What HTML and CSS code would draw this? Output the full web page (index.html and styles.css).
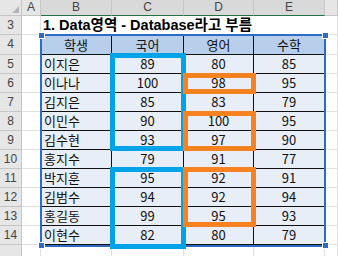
FILE: index.html
```html
<!DOCTYPE html>
<html>
<head>
<meta charset="utf-8">
<link rel="stylesheet" href="styles.css">
</head>
<body>
<div class="sheet">
  <div class="grid">
    <div class="corner"><svg width="21" height="15" viewBox="0 0 21 15"><polygon points="19,6 19,13 12,13" fill="#b4b4b4"/></svg></div>
    <div class="ch">A</div>
    <div class="ch hl">B</div>
    <div class="ch hl">C</div>
    <div class="ch hl">D</div>
    <div class="ch hl">E</div>
    <div class="ch"></div>

    <div class="rh">3</div>
    <div class="c"></div>
    <div class="c title">1. Data영역 - Database라고 부름</div>
    <div class="c"></div>

    <div class="rh">4</div>
    <div class="c"></div>
    <div class="th">학생</div>
    <div class="th">국어</div>
    <div class="th">영어</div>
    <div class="th">수학</div>
    <div class="c"></div>

    <div class="rh">5</div><div class="c"></div><div class="td name">이지은</div><div class="td">89</div><div class="td">80</div><div class="td">85</div><div class="c"></div>
    <div class="rh">6</div><div class="c"></div><div class="td name">이나나</div><div class="td">100</div><div class="td">98</div><div class="td">95</div><div class="c"></div>
    <div class="rh">7</div><div class="c"></div><div class="td name">김지은</div><div class="td">85</div><div class="td">83</div><div class="td">79</div><div class="c"></div>
    <div class="rh">8</div><div class="c"></div><div class="td name">이민수</div><div class="td">90</div><div class="td">100</div><div class="td">95</div><div class="c"></div>
    <div class="rh">9</div><div class="c"></div><div class="td name">김수현</div><div class="td">93</div><div class="td">97</div><div class="td">90</div><div class="c"></div>
    <div class="rh">10</div><div class="c"></div><div class="td name">홍지수</div><div class="td">79</div><div class="td">91</div><div class="td">77</div><div class="c"></div>
    <div class="rh">11</div><div class="c"></div><div class="td name">박지훈</div><div class="td">95</div><div class="td">92</div><div class="td">91</div><div class="c"></div>
    <div class="rh">12</div><div class="c"></div><div class="td name">김범수</div><div class="td">94</div><div class="td">92</div><div class="td">94</div><div class="c"></div>
    <div class="rh">13</div><div class="c"></div><div class="td name">홍길동</div><div class="td">99</div><div class="td">95</div><div class="td">93</div><div class="c"></div>
    <div class="rh">14</div><div class="c"></div><div class="td name">이현수</div><div class="td">82</div><div class="td">80</div><div class="td">79</div><div class="c"></div>

    <div class="rh"></div><div class="c"></div><div class="c"></div><div class="c"></div><div class="c"></div><div class="c"></div><div class="c"></div>
  </div>

  <div class="frame"></div>
  <div class="handle h-tl"></div>
  <div class="handle h-tr"></div>
  <div class="handle h-bl"></div>
  <div class="handle h-br"></div>

  <div class="box cyan cy1"></div>
  <div class="box cyan cy2"></div>
  <div class="box orange or1"></div>
  <div class="box orange or2"></div>
  <div class="box orange or3"></div>
</div>
</body>
</html>
```

FILE: styles.css
```css
html, body {
  margin: 0;
  padding: 0;
  background: #ffffff;
}

.sheet {
  position: relative;
  width: 338px;
  height: 256px;
  overflow: hidden;
  font-family: "Noto Sans CJK KR", "Noto Sans", sans-serif;
  color: #111;
}

.grid {
  display: grid;
  grid-template-columns: 22px 19px 71px 72px 70px 71px 1fr;
  grid-template-rows: 16px 19px 20px repeat(10, 19px) 20px;
}

.grid > div {
  box-sizing: border-box;
}

.corner {
  background: #e6e6e6;
  border-right: 1px solid #c6c6c6;
  border-bottom: 1px solid #c6c6c6;
}
.corner svg { display: block; }

.ch {
  background: #e6e6e6;
  border-right: 1px solid #c6c6c6;
  border-bottom: 1px solid #c6c6c6;
  font-family: "Liberation Sans", "Noto Sans", sans-serif;
  font-size: 12px;
  line-height: 15px;
  text-align: center;
  color: #444;
}
.ch.hl {
  background: #d9d9d9;
  border-bottom: 1px solid #217346;
}

.rh {
  background: #e6e6e6;
  border-right: 1px solid #c6c6c6;
  border-bottom: 1px solid #c6c6c6;
  font-family: "Liberation Sans", "Noto Sans", sans-serif;
  font-size: 12px;
  line-height: 18px;
  text-align: center;
  color: #444;
}

.c {
  border-right: 1px solid #e1e1e1;
  border-bottom: 1px solid #e1e1e1;
}

.title {
  grid-column: span 4;
  border-right: none;
  font-family: "Liberation Sans", "Noto Sans CJK KR", sans-serif;
  font-size: 14.5px;
  font-weight: bold;
  line-height: 18px;
  padding-left: 2px;
  white-space: nowrap;
  color: #000;
}

.th {
  background: #b7cfea;
  border-right: 1px solid #111;
  border-bottom: 1px solid #111;
  font-size: 13px;
  line-height: 19px;
  text-align: center;
}

.td {
  background: #e8eef8;
  border-right: 1px solid #111;
  border-bottom: 1px solid #111;
  font-size: 13px;
  line-height: 18px;
  text-align: center;
}
.td.name {
  text-align: left;
  padding-left: 3px;
}

.frame {
  position: absolute;
  left: 40px;
  top: 34px;
  width: 286px;
  height: 213px;
  box-sizing: border-box;
  border: 2px solid #2f6bc5;
}

.handle {
  position: absolute;
  width: 7px;
  height: 7px;
  box-sizing: border-box;
  background: #2f6bc5;
  border: 1px solid #ffffff;
}
.h-tl { left: 38px; top: 32px; }
.h-tr { left: 322px; top: 32px; }
.h-bl { left: 38px; top: 242px; }
.h-br { left: 322px; top: 242px; }

.box {
  position: absolute;
  box-sizing: border-box;
  border-width: 5px;
  border-style: solid;
}
.cyan { border-color: #00a2e8; }
.orange { border-color: #f7821f; }

.cy1 { left: 110px; top: 53px; width: 76px; height: 98px; }
.cy2 { left: 110px; top: 167px; width: 76px; height: 82px; }
.or1 { left: 183px; top: 73px; width: 73px; height: 21px; }
.or2 { left: 183px; top: 111px; width: 73px; height: 40px; }
.or3 { left: 183px; top: 167px; width: 73px; height: 60px; }
```
